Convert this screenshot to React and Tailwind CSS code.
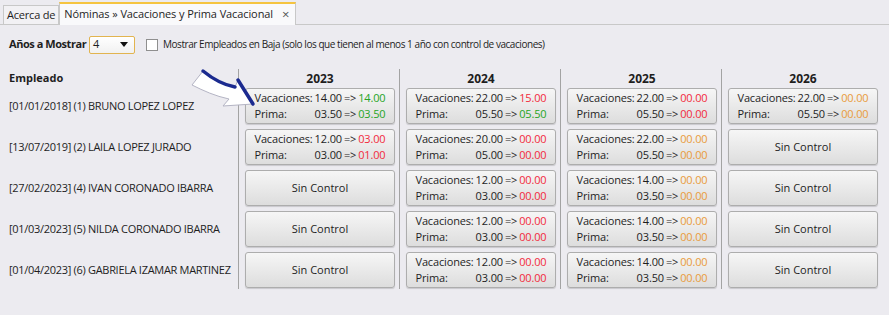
import React from 'react';

const GREEN = 'text-[#25a525]';
const RED = 'text-[#f22a3c]';
const ORANGE = 'text-[#e99b3a]';

const employees = [
  '[01/01/2018] (1) BRUNO LOPEZ LOPEZ',
  '[13/07/2019] (2) LAILA LOPEZ JURADO',
  '[27/02/2023] (4) IVAN CORONADO IBARRA',
  '[01/03/2023] (5) NILDA CORONADO IBARRA',
  '[01/04/2023] (6) GABRIELA IZAMAR MARTINEZ',
];

// null = Sin Control
const years = [
  {
    year: '2023',
    cells: [
      { v: ['14.00', '14.00', GREEN], p: ['03.50', '03.50', GREEN] },
      { v: ['12.00', '03.00', RED], p: ['03.00', '01.00', RED] },
      null,
      null,
      null,
    ],
  },
  {
    year: '2024',
    cells: [
      { v: ['22.00', '15.00', RED], p: ['05.50', '05.50', GREEN] },
      { v: ['20.00', '00.00', RED], p: ['05.00', '00.00', RED] },
      { v: ['12.00', '00.00', RED], p: ['03.00', '00.00', RED] },
      { v: ['12.00', '00.00', RED], p: ['03.00', '00.00', RED] },
      { v: ['12.00', '00.00', RED], p: ['03.00', '00.00', RED] },
    ],
  },
  {
    year: '2025',
    cells: [
      { v: ['22.00', '00.00', RED], p: ['05.50', '00.00', RED] },
      { v: ['22.00', '00.00', ORANGE], p: ['05.50', '00.00', ORANGE] },
      { v: ['14.00', '00.00', ORANGE], p: ['03.50', '00.00', ORANGE] },
      { v: ['14.00', '00.00', ORANGE], p: ['03.50', '00.00', ORANGE] },
      { v: ['14.00', '00.00', ORANGE], p: ['03.50', '00.00', ORANGE] },
    ],
  },
  {
    year: '2026',
    cells: [
      { v: ['22.00', '00.00', ORANGE], p: ['05.50', '00.00', ORANGE] },
      null,
      null,
      null,
      null,
    ],
  },
];

const Card = ({ cell }) => (
  <div className="h-[36px] rounded-[3px] border border-[#adadad] bg-gradient-to-b from-[#f6f6f6] to-[#dddddd] shadow-[0_1px_1px_rgba(0,0,0,0.15)] flex items-center justify-center">
    {cell ? (
      <div className="grid grid-cols-[auto_auto_auto_auto] leading-[16px] text-[#1e1e1e] tracking-[-0.15px]">
        <span className="pr-[2px]">Vacaciones:</span>
        <span className="text-right">{cell.v[0]}</span>
        <span className="px-[2px]">=&gt;</span>
        <span className={cell.v[2]}>{cell.v[1]}</span>
        <span className="pr-[2px]">Prima:</span>
        <span className="text-right">{cell.p[0]}</span>
        <span className="px-[2px]">=&gt;</span>
        <span className={cell.p[2]}>{cell.p[1]}</span>
      </div>
    ) : (
      <span className="text-[#1e1e1e]">Sin Control</span>
    )}
  </div>
);

export default function App() {
  return (
    <div className="relative w-[889px] h-[315px] bg-[#ecebf0] text-[11px] text-[#1e1e1e] font-['Open_Sans',sans-serif] overflow-hidden">
      {/* Tabs */}
      <div className="h-[25px] flex items-end pl-[3px] border-b border-[#c8c8c8]">
        <div className="h-[19px] px-[3px] flex items-center border border-b-0 border-[#c8c8c8] bg-[#f2f1f4] tracking-[-0.2px]">
          Acerca de
        </div>
        <div className="h-[23px] pl-[4px] pr-[6px] flex items-center gap-[9px] border-x border-[#c8c8c8] border-t-[2px] border-t-[#f5c440] bg-[#f9f9fb] -mb-px tracking-[-0.1px]">
          <span>Nóminas » Vacaciones y Prima Vacacional</span>
          <span className="text-[13px] text-[#555]">×</span>
        </div>
      </div>

      {/* Controls */}
      <div className="h-[44px] flex items-center pl-[9px] pb-[5px] whitespace-nowrap">
        <span className="font-bold w-[80px] tracking-[-0.45px]">Años a Mostrar</span>
        <div className="w-[46px] h-[18px] rounded-[2px] border border-[#e2b44f] bg-gradient-to-b from-white to-[#f1f1f1] flex items-center justify-between pl-[3px] pr-[6px]">
          <span>4</span>
          <svg width="8" height="5" viewBox="0 0 8 5"><path d="M0 0h8L4 5z" fill="#111" /></svg>
        </div>
        <div className="ml-[11px] w-[12px] h-[12px] border border-[#8f8f8f] bg-white" />
        <span className="ml-[5px] text-[10px] tracking-[-0.45px]">Mostrar Empleados en Baja (solo los que tienen al menos 1 año con control de vacaciones)</span>
      </div>

      {/* Grid */}
      <div className="flex">
        <div className="w-[238px] pl-[9px] whitespace-nowrap">
          <div className="h-[19px] flex items-center font-bold">Empleado</div>
          <div className="flex flex-col gap-[5px] tracking-[-0.3px]">
            {employees.map((e) => (
              <div key={e} className="h-[36px] flex items-center">{e}</div>
            ))}
          </div>
        </div>
        {years.map((y) => (
          <div key={y.year} className="w-[161px] border-l border-[#a3a3a3] pl-[6px] pr-[4px] pb-[1px]">
            <div className="h-[19px] flex items-center justify-center font-bold text-[12px]">{y.year}</div>
            <div className="flex flex-col gap-[5px]">
              {y.cells.map((c, i) => (
                <Card key={i} cell={c} />
              ))}
            </div>
          </div>
        ))}
      </div>

      {/* Pointer arrow */}
      <svg className="absolute left-0 top-0 pointer-events-none" width="889" height="315" viewBox="0 0 889 315">
        <path
          d="M203 71 C214 80 224 85 235 87 L238 80 L253 104 L223 106 L229 99 C215 96 204 91 192 85 Z"
          fill="#ffffff"
          stroke="#b4b4c4"
          strokeWidth="1"
          strokeLinejoin="round"
        />
        <path d="M203 71 C214 80 224 85 235 87" fill="none" stroke="#1b2a8f" strokeWidth="3.5" strokeLinecap="round" />
        <path d="M238 80 L253 104" fill="none" stroke="#1b2a8f" strokeWidth="3.5" strokeLinecap="round" />
      </svg>
    </div>
  );
}
